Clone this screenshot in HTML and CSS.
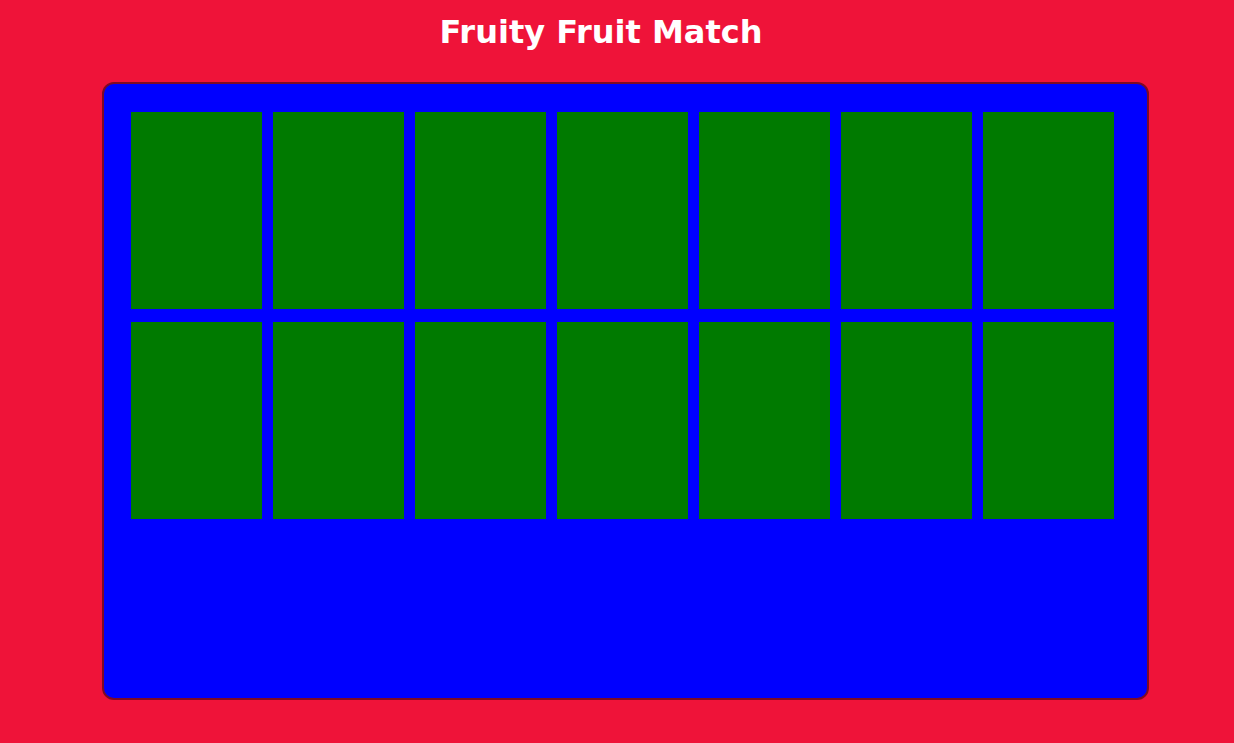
FILE: index.html
```html
<!DOCTYPE html>
<html>
<head>
<meta charset="utf-8">
<link rel="stylesheet" href="styles.css">
</head>
<body>
<h1 class="title">Fruity Fruit Match</h1>
<div class="board">
  <div class="grid">
    <div class="card"></div><div class="card"></div><div class="card"></div><div class="card"></div><div class="card"></div><div class="card"></div><div class="card"></div>
    <div class="card"></div><div class="card"></div><div class="card"></div><div class="card"></div><div class="card"></div><div class="card"></div><div class="card"></div>
  </div>
</div>
</body>
</html>
```
FILE: styles.css
```css
html, body {
  margin: 0;
  padding: 0;
  background: #ef1339;
  height: 100%;
  overflow: hidden;
}
.title {
  margin: 0;
  width: 1202px;
  padding-top: 13px;
  height: 68px;
  box-sizing: border-box;
  text-align: center;
  font-family: "DejaVu Sans", sans-serif;
  font-weight: bold;
  font-size: 32px;
  line-height: 38px;
  color: #ffffff;
}
.board {
  margin-left: 102px;
  margin-top: 14px;
  width: 1047px;
  height: 618px;
  box-sizing: border-box;
  background: #0000ff;
  border: 2px solid #7d0a24;
  border-radius: 12px;
  padding: 28px 0 0 27px;
}
.grid {
  display: grid;
  grid-template-columns: repeat(7, 131px);
  grid-auto-rows: 197px;
  column-gap: 11px;
  row-gap: 13px;
}
.card {
  background: #007a00;
}
```
